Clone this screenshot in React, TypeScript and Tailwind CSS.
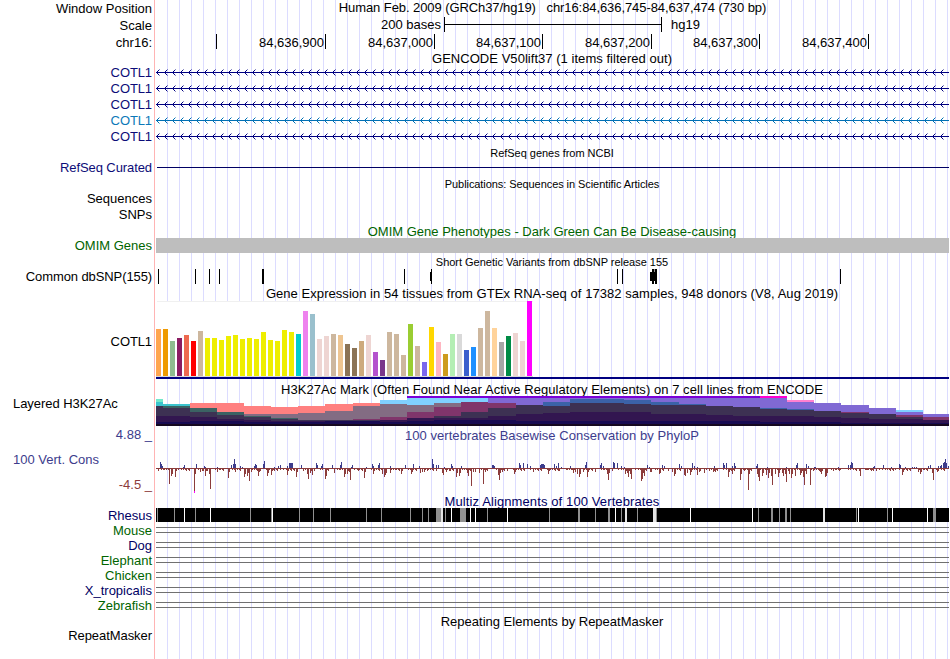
import React from 'react';

interface TrackTitleProps {
  text: string;
  className?: string;
}

interface TrackRowProps {
  label: string;
  className?: string;
  labelClassName?: string;
  height: number;
  children?: React.ReactNode;
}

// Pixel columns of the image that hold track data
const LEFT = 156;
const WIDTH = 793;

const guides = Array.from({ length: 66 }, (_, i) => 167 + i * 12);
const arrowTips = Array.from({ length: 99 }, (_, i) => LEFT + i * 8);

const genes = [
  { color: '#000080', text: 'text-[#0c0c78]' },
  { color: '#000080', text: 'text-[#0c0c78]' },
  { color: '#000080', text: 'text-[#0c0c78]' },
  { color: '#0070b4', text: 'text-[#0c78b8]' },
  { color: '#000080', text: 'text-[#0c0c78]' },
];

const ruler = [
  { x: 216, label: '' },
  { x: 325, label: '84,636,900' },
  { x: 434, label: '84,637,000' },
  { x: 542, label: '84,637,100' },
  { x: 651, label: '84,637,200' },
  { x: 759, label: '84,637,300' },
  { x: 868, label: '84,637,400' },
];

// x, y, width, height
const snps = [
  [158, 1, 1, 15], [195, 1, 1, 15], [209, 1, 1, 15], [219, 1, 1, 15], [262, 1, 2, 15],
  [404, 1, 1, 15], [430, 4, 1, 9], [431, 1, 1, 15], [617, 1, 1, 15], [622, 1, 1, 15],
  [650, 4, 7, 9], [652, 1, 2, 15], [655, 1, 1, 15], [656, 1, 1, 15], [840, 1, 1, 15],
];

const tissues: [number, string][] = [
  [47, '#ffa54f'], [47, '#ee9a00'], [35, '#8fbc8f'], [38, '#8b1c62'], [41, '#ee6a50'], [35, '#ff0000'],
  [45, '#cdb79e'], [38, '#eeee00'], [38, '#eeee00'], [36, '#eeee00'], [40, '#eeee00'], [41, '#eeee00'],
  [37, '#eeee00'], [38, '#eeee00'], [37, '#eeee00'], [44, '#eeee00'], [36, '#eeee00'], [35, '#eeee00'],
  [46, '#eeee00'], [44, '#eeee00'], [42, '#00cdcd'], [65, '#ee82ee'], [62, '#9ac0cd'], [37, '#eed5d2'],
  [40, '#eed5d2'], [42, '#cdb79e'], [41, '#eec591'], [32, '#8b7355'], [28, '#8b7355'], [35, '#cdaa7d'],
  [41, '#eed5d2'], [24, '#b452cd'], [16, '#7a378b'], [44, '#cdb79e'], [42, '#cdb79e'], [21, '#cdb79e'],
  [52, '#9acd32'], [30, '#cdb79e'], [14, '#7a67ee'], [49, '#ffd700'], [34, '#ffb6c1'], [22, '#cd9b1d'],
  [42, '#b4eeb4'], [42, '#d9d9d9'], [26, '#3a5fcd'], [29, '#1e90ff'], [48, '#cdb79e'], [65, '#cdb79e'],
  [48, '#ffd39b'], [34, '#a6a6a6'], [40, '#008b45'], [43, '#eed5d2'], [35, '#eed5d2'], [75, '#ff00ff'],
];

const MINT = '#73e8cb';
const CYAN = '#3cc4cd';
const TEAL = '#3b6263';
const SALMON = '#ff8080';
const MAUVE = '#836c83';
const SKY = '#80d0ff';
const PLUM = '#80356b';
const VIOLET = '#7b00d8';
const PURPLE = '#8069d4';
const BLUE = '#3b62a8';
const SLATE = '#3d3153';
const DEEP = '#321650';
const NAVY = '#180b52';

// Each cell starts at x, its layers at the given y and run down to the next layer
const h3k27ac: [number, [number, string][]][] = [
  [156, [[3, MINT], [6, CYAN], [10, SLATE], [20, DEEP], [26, NAVY]]],
  [163, [[8, CYAN], [10, TEAL], [12, SLATE], [20, DEEP], [26, NAVY]]],
  [190, [[7, SALMON], [12, TEAL], [16, SLATE], [21, DEEP], [25, NAVY]]],
  [217, [[7, SALMON], [16, TEAL], [19, SLATE], [23, DEEP], [25, NAVY]]],
  [244, [[10, SALMON], [18, MAUVE], [20, TEAL], [21, SLATE], [24, DEEP], [26, NAVY]]],
  [271, [[11, SALMON], [18, MAUVE], [22, TEAL], [23, SLATE], [25, DEEP], [26, NAVY]]],
  [298, [[10, SALMON], [17, MAUVE], [24, SLATE], [25, DEEP], [26, NAVY]]],
  [325, [[8, SALMON], [15, MAUVE], [24, SLATE], [25, NAVY]]],
  [353, [[7, SALMON], [10, MAUVE], [23, PLUM], [24, SLATE], [25, NAVY]]],
  [380, [[4, SKY], [8, MAUVE], [21, PLUM], [24, DEEP], [26, NAVY]]],
  [407, [[0, VIOLET], [2, SKY], [9, MAUVE], [16, PLUM], [22, DEEP], [25, NAVY]]],
  [434, [[0, VIOLET], [2, SKY], [7, MAUVE], [11, PLUM], [20, SLATE], [22, DEEP], [24, NAVY]]],
  [461, [[0, VIOLET], [2, SKY], [6, PLUM], [16, SLATE], [22, DEEP], [24, NAVY]]],
  [488, [[0, VIOLET], [2, PURPLE], [7, PLUM], [12, SLATE], [20, DEEP], [24, NAVY]]],
  [516, [[0, VIOLET], [2, PURPLE], [9, SLATE], [18, DEEP], [25, NAVY]]],
  [543, [[0, VIOLET], [2, PURPLE], [6, BLUE], [10, SLATE], [17, DEEP], [25, NAVY]]],
  [570, [[0, VIOLET], [2, PURPLE], [3, BLUE], [7, SLATE], [16, DEEP], [25, NAVY]]],
  [597, [[0, VIOLET], [2, PURPLE], [3, BLUE], [7, SLATE], [16, DEEP], [25, NAVY]]],
  [624, [[0, VIOLET], [2, PURPLE], [4, BLUE], [8, SLATE], [16, DEEP], [25, NAVY]]],
  [651, [[0, VIOLET], [2, PURPLE], [6, BLUE], [9, SLATE], [18, DEEP], [25, NAVY]]],
  [679, [[0, VIOLET], [2, PURPLE], [8, BLUE], [9, SLATE], [18, DEEP], [25, NAVY]]],
  [706, [[0, VIOLET], [2, PURPLE], [10, SLATE], [19, DEEP], [25, NAVY]]],
  [733, [[0, VIOLET], [2, PURPLE], [11, SLATE], [20, DEEP], [25, NAVY]]],
  [760, [[0, '#ff00d0'], [2, PURPLE], [12, BLUE], [13, SLATE], [20, DEEP], [26, NAVY]]],
  [787, [[4, '#ff80d0'], [6, PURPLE], [13, BLUE], [14, SLATE], [20, DEEP], [26, NAVY]]],
  [814, [[7, PURPLE], [15, SLATE], [21, DEEP], [26, NAVY]]],
  [841, [[9, PURPLE], [16, PLUM], [17, SLATE], [22, DEEP], [27, NAVY]]],
  [869, [[12, PURPLE], [18, SLATE], [23, DEEP], [27, NAVY]]],
  [896, [[14, SKY], [16, PURPLE], [19, PLUM], [21, SLATE], [23, DEEP], [27, NAVY]]],
  [923, [[18, PURPLE], [21, PLUM], [24, DEEP], [27, NAVY]]],
];

// Conserved (up) and fast evolving (down) bases: x, score height
const conserved = [
  [160, 6], [161, 4], [162, 2], [184, 3], [183, 1], [196, 4], [204, 2], [205, 1], [217, 1], [231, 3], [234, 9],
  [233, 4], [235, 4], [240, 2], [242, 1], [254, 2], [255, 4], [256, 3], [263, 4], [264, 7], [274, 1], [278, 2],
  [280, 3], [287, 2], [289, 5], [290, 5], [291, 5], [292, 5], [301, 3], [316, 5], [317, 3], [322, 4], [321, 2],
  [332, 3], [341, 6], [340, 3], [352, 3], [351, 1], [366, 1], [372, 4], [373, 2], [378, 3], [379, 5], [390, 2],
  [405, 3], [413, 4], [419, 2], [432, 9], [433, 4], [436, 3], [438, 3], [444, 1], [451, 4], [452, 2], [461, 2],
  [492, 3], [493, 3], [494, 2], [519, 5], [520, 3], [523, 5], [527, 4], [530, 2], [540, 3], [541, 4], [542, 4],
  [543, 4], [544, 3], [554, 4], [556, 2], [558, 5], [561, 1], [570, 2], [585, 3], [586, 6], [600, 3], [601, 5],
  [603, 2], [613, 6], [614, 5], [617, 5], [621, 2], [624, 1], [647, 3], [649, 1], [662, 3], [664, 2], [679, 4],
  [681, 2], [692, 5], [694, 2], [697, 1], [714, 2], [723, 5], [724, 3], [726, 5], [732, 2], [734, 5], [735, 2],
  [756, 2], [757, 4], [767, 1], [786, 1], [796, 3], [797, 5], [806, 4], [808, 2], [814, 1], [815, 1], [838, 1],
  [848, 3], [850, 3], [851, 6], [852, 5], [873, 1], [874, 2], [883, 3], [891, 1], [899, 4], [900, 3], [905, 1],
  [912, 1], [914, 1], [916, 1], [928, 2], [930, 3], [938, 2], [940, 2], [941, 3], [943, 5], [944, 6], [945, 9],
  [946, 5], [948, 2],
];

const accelerated = [
  [158, 3], [169, 16], [171, 8], [172, 6], [175, 9], [176, 3], [186, 3], [194, 23], [195, 6], [200, 4], [202, 3],
  [205, 8], [207, 3], [210, 21], [209, 6], [217, 4], [228, 10], [229, 4], [235, 4], [239, 2], [244, 9], [245, 6],
  [247, 8], [249, 13], [248, 5], [251, 4], [258, 8], [259, 4], [267, 8], [268, 5], [271, 7], [272, 3], [280, 2],
  [287, 7], [288, 3], [296, 9], [297, 4], [303, 3], [308, 11], [307, 6], [310, 5], [312, 7], [314, 3], [325, 11],
  [326, 8], [334, 5], [339, 2], [344, 9], [345, 6], [347, 6], [350, 12], [349, 4], [358, 3], [364, 10], [365, 4],
  [373, 6], [374, 3], [382, 6], [384, 9], [385, 7], [386, 5], [390, 5], [401, 6], [402, 3], [411, 6], [412, 4],
  [420, 5], [422, 4], [424, 4], [427, 3], [443, 7], [442, 5], [446, 4], [449, 3], [456, 9], [457, 5], [459, 8],
  [460, 5], [468, 8], [467, 5], [471, 18], [473, 4], [475, 4], [479, 5], [483, 16], [485, 4], [499, 12], [498, 7],
  [500, 5], [502, 4], [507, 3], [514, 6], [515, 4], [523, 2], [533, 4], [548, 6], [549, 3], [559, 3], [566, 2],
  [573, 5], [575, 4], [577, 6], [579, 9], [580, 6], [583, 4], [587, 9], [588, 4], [595, 4], [608, 12], [607, 6],
  [609, 5], [625, 6], [628, 9], [627, 5], [631, 11], [630, 6], [641, 13], [642, 11], [644, 8], [643, 5], [650, 4],
  [651, 4], [659, 6], [660, 5], [668, 3], [672, 4], [674, 8], [675, 6], [684, 7], [685, 8], [687, 5], [690, 7],
  [691, 4], [697, 7], [699, 4], [704, 5], [709, 3], [713, 4], [715, 4], [728, 9], [729, 4], [732, 6], [740, 12],
  [741, 6], [744, 3], [748, 22], [749, 6], [757, 6], [759, 13], [758, 9], [762, 8], [763, 5], [766, 7], [768, 10],
  [769, 5], [772, 17], [771, 8], [775, 6], [778, 9], [779, 5], [783, 8], [782, 5], [786, 14], [785, 6], [789, 6],
  [791, 10], [792, 6], [795, 8], [800, 7], [801, 5], [804, 17], [803, 9], [806, 6], [810, 17], [813, 3], [820, 4],
  [821, 6], [825, 9], [826, 8], [827, 5], [833, 3], [840, 2], [860, 8], [859, 3], [866, 2], [871, 3], [879, 2],
  [887, 2], [895, 2], [902, 7], [903, 4], [907, 3], [918, 4], [920, 6], [921, 4], [926, 2], [933, 12], [932, 5],
  [937, 4], [938, 3],
];

// x, width, color of alignment gaps
const rhesusGaps: [number, number, string][] = [
  [157, 1, '#909090'], [174, 1, '#909090'], [184, 1, '#fff'], [195, 1, '#909090'], [210, 1, '#fff'],
  [250, 1, '#909090'], [271, 1, '#909090'], [272, 1, '#fff'], [299, 1, '#909090'], [313, 1, '#909090'],
  [330, 1, '#909090'], [366, 1, '#909090'], [381, 1, '#909090'], [410, 1, '#909090'], [422, 1, '#909090'],
  [428, 1, '#909090'], [436, 5, '#909090'], [441, 2, '#e4e4e4'], [445, 1, '#909090'], [451, 1, '#fff'],
  [460, 6, '#909090'], [470, 1, '#fff'], [475, 1, '#fff'], [487, 1, '#909090'], [507, 1, '#fff'],
  [549, 1, '#909090'], [578, 2, '#909090'], [595, 1, '#909090'], [608, 2, '#909090'], [615, 1, '#fff'],
  [621, 1, '#909090'], [625, 2, '#e4e4e4'], [637, 1, '#909090'], [653, 3, '#e4e4e4'], [656, 1, '#909090'],
  [690, 1, '#fff'], [752, 1, '#fff'], [758, 1, '#909090'], [771, 2, '#909090'], [779, 1, '#909090'],
  [785, 2, '#909090'], [790, 1, '#909090'], [823, 2, '#e4e4e4'], [856, 1, '#909090'], [858, 1, '#fff'],
  [887, 1, '#909090'], [892, 1, '#fff'], [927, 1, '#fff'], [933, 3, '#909090'],
];

const species = [
  { name: 'Mouse', text: 'text-[#006400]' },
  { name: 'Dog', text: 'text-[#000064]' },
  { name: 'Elephant', text: 'text-[#006400]' },
  { name: 'Chicken', text: 'text-[#006400]' },
  { name: 'X_tropicalis', text: 'text-[#000064]' },
  { name: 'Zebrafish', text: 'text-[#006400]' },
];

const TrackTitle = ({ text, className = '' }: TrackTitleProps) => (
  <div className={`ml-[156px] flex w-[792px] justify-center whitespace-pre ${className}`}>
    <span>{text}</span>
  </div>
);

const Plot = ({ height, children }: { height: number; children?: React.ReactNode }) => (
  <svg width={WIDTH} height={height} viewBox={`${LEFT} 0 ${WIDTH} ${height}`} shapeRendering="crispEdges" className="block">
    {children}
  </svg>
);

const TrackRow = ({ label, className = '', labelClassName = 'pt-px', height, children }: TrackRowProps) => (
  <div className={`flex ${className}`}>
    <div className={`mr-1 w-[152px] shrink-0 text-right whitespace-nowrap ${labelClassName}`}>{label}</div>
    {children && <Plot height={height}>{children}</Plot>}
  </div>
);

const Arrows = ({ color }: { color: string }) => (
  <>
    <rect x={LEFT} y={8} width={WIDTH} height={1} fill={color} />
    {arrowTips.map((x) => (
      <g key={x} fill={color}>
        <rect x={x + 1} y={7} width={1} height={3} />
        <rect x={x + 2} y={6} width={1} height={1} />
        <rect x={x + 2} y={10} width={1} height={1} />
        <rect x={x + 3} y={5} width={1} height={1} opacity={0.45} />
        <rect x={x + 3} y={11} width={1} height={1} opacity={0.45} />
      </g>
    ))}
  </>
);

const GuideLines = () => (
  <svg width={950} height={659} shapeRendering="crispEdges" className="absolute inset-0">
    {guides.map((x) => (
      <rect key={x} x={x} y={0} width={1} height={659} fill="#dcdcff" />
    ))}
    <rect x={154} y={0} width={1} height={659} fill="#ffb4b4" />
  </svg>
);

const ExpressionBars = () => (
  <>
    <rect x={156} y={0} width={377} height={76} fill="#fff" />
    <rect x={157} y={0} width={376} height={1} fill="#f0f0f0" />
    <rect x={156} y={75} width={377} height={1} fill="#d8d8d8" />
    {tissues.map(([value, color], i) => (
      <rect key={i} x={LEFT + i * 7} y={75 - value} width={5} height={value} fill={color} />
    ))}
    <rect x={LEFT} y={76} width={WIDTH} height={2} fill="#000080" />
  </>
);

const HistoneLayers = () => (
  <>
    {h3k27ac.map(([x, layers], i) => {
      const end = i + 1 < h3k27ac.length ? h3k27ac[i + 1][0] : LEFT + WIDTH;
      return layers.map(([y, color]) => (
        <rect key={`${x}-${y}`} x={x} y={y} width={end - x} height={30 - y} fill={color} />
      ));
    })}
    <rect x={LEFT} y={28} width={WIDTH} height={2} fill="#150820" />
  </>
);

const ConservationWiggle = () => (
  <>
    {Array.from({ length: WIDTH }, (_, i) => (
      // background scores stay within a few pixels of the zero line
      <rect key={i} x={LEFT + i} y={26} width={1} height={[1, 1, 2, 1, 3, 2, 1, 1, 2, 1, 1][(i * 7 + (i >> 3)) % 11]} fill="#8c3c3c" />
    ))}
    {accelerated.map(([x, h]) => (
      <rect key={x} x={x} y={26} width={1} height={h} fill="#8c3c3c" />
    ))}
    {conserved.map(([x, h]) => (
      <rect key={x} x={x} y={26 - h} width={1} height={h} fill="#3c3c8c" />
    ))}
    <rect x={194} y={49} width={1} height={2} fill="#ff00ff" />
  </>
);

export default function App() {
  return (
    <div className="relative h-[659px] w-[950px] overflow-hidden bg-white font-['Liberation_Sans',Arial,sans-serif] text-[13px] leading-[15px] text-black">
      <GuideLines />

      <div className="relative">
        {/* Position, scale and ruler */}
        <div className="flex h-[17px]">
          <div className="mr-1 w-[152px] pt-px text-right">Window Position</div>
          <div className="w-[793px] text-center tracking-[-0.08px] whitespace-pre">
            Human Feb. 2009 (GRCh37/hg19){'   '}chr16:84,636,745-84,637,474 (730 bp)
          </div>
        </div>
        <div className="flex h-4">
          <div className="mr-1 w-[152px] pt-px text-right">Scale</div>
          <div className="w-[285px] text-right">200 bases</div>
          <div className="ml-[3px] flex h-[15px] w-[218px] items-center border-x border-black">
            <div className="h-px w-full bg-black" />
          </div>
          <div className="ml-[9px]">hg19</div>
        </div>
        <div className="flex h-4">
          <div className="mr-1 w-[152px] pt-0.5 text-right">chr16:</div>
          <Plot height={16}>
            {ruler.map(({ x, label }) => (
              <g key={x}>
                <rect x={x} y={1} width={1} height={15} fill="#000" />
                <text x={x - 1} y={14} textAnchor="end">{label}</text>
              </g>
            ))}
          </Plot>
        </div>

        {/* Gene models */}
        <TrackTitle text="GENCODE V50lift37 (1 items filtered out)" className="h-[15px] pt-0.5 tracking-[0.04px]" />
        {genes.map((gene, i) => (
          <TrackRow key={i} label="COTL1" height={16} className="h-4" labelClassName={`pt-px tracking-[-0.1px] ${gene.text}`}>
            <Arrows color={gene.color} />
          </TrackRow>
        ))}
        <TrackTitle text="RefSeq genes from NCBI" className="h-[15px] pt-[3px] text-[11px] leading-3 tracking-[-0.03px]" />
        <TrackRow label="RefSeq Curated" height={16} className="h-4" labelClassName="pt-px tracking-[-0.09px] text-[#0c0c78]">
          <rect x={157} y={8} width={792} height={1} fill="#000064" />
        </TrackRow>

        {/* Literature */}
        <TrackTitle text="Publications: Sequences in Scientific Articles" className="h-[15px] pt-[3px] text-[11px] leading-3 tracking-[-0.07px]" />
        <TrackRow label="Sequences" height={16} className="h-4" />
        <TrackRow label="SNPs" height={16} className="h-4" />
        <TrackTitle
          text="OMIM Gene Phenotypes - Dark Green Can Be Disease-causing"
          className="h-4 pt-0.5 text-[#006400]"
        />
        <TrackRow label="OMIM Genes" height={15} className="h-[15px]" labelClassName="text-[#006400]">
          <rect x={LEFT} y={0} width={WIDTH} height={15} fill="#bebebe" />
        </TrackRow>

        {/* Variation */}
        <TrackTitle text="Short Genetic Variants from dbSNP release 155" className="h-[15px] pt-[3px] text-[11px] leading-3 tracking-[-0.02px]" />
        <TrackRow label="Common dbSNP(155)" height={16} className="h-4" labelClassName="pt-px tracking-[-0.1px]">
          {snps.map(([x, y, width, height]) => (
            <rect key={x} x={x} y={y} width={width} height={height} fill="#000" />
          ))}
          <rect x={654} y={1} width={1} height={3} fill="#909090" />
        </TrackRow>

        {/* Expression */}
        <TrackTitle
          text="Gene Expression in 54 tissues from GTEx RNA-seq of 17382 samples, 948 donors (V8, Aug 2019)"
          className="h-[17px] pt-0.5 tracking-[0.055px]"
        />
        <TrackRow label="COTL1" height={78} className="h-[78px]" labelClassName="pt-[33px] tracking-[-0.1px]">
          <ExpressionBars />
        </TrackRow>

        {/* Regulation */}
        <TrackTitle
          text="H3K27Ac Mark (Often Found Near Active Regulatory Elements) on 7 cell lines from ENCODE"
          className="h-[17px] pt-[3px] tracking-[0.05px]"
        />
        <div className="flex h-[30px]">
          <div className="mr-1 w-[152px] pl-[13px] tracking-[-0.05px]">Layered H3K27Ac</div>
          <Plot height={30}>
            <HistoneLayers />
          </Plot>
        </div>

        {/* Conservation */}
        <div className="flex h-[66px]">
          <div className="mr-1 w-[152px]">
            <div className="pt-px text-right text-[#3c3c8c]">4.88 _</div>
            <div className="pt-2.5 pl-[13px] text-[#3c3c8c]">100 Vert. Cons</div>
            <div className="pt-2.5 text-right text-[#8c3c3c]">-4.5 _</div>
          </div>
          <div className="w-[793px]">
            <div className="h-4 w-[792px] pt-0.5 text-center tracking-[0.04px] text-[#3c3c8c]">
              100 vertebrates Basewise Conservation by PhyloP
            </div>
            <Plot height={52}>
              <ConservationWiggle />
            </Plot>
          </div>
        </div>
        <TrackTitle text="Multiz Alignments of 100 Vertebrates" className="h-4 pt-0.5 tracking-[0.11px] text-[#000064]" />
        <TrackRow label="Rhesus" height={14} className="h-[15px]" labelClassName="text-[#000064]">
          <rect x={LEFT} y={0} width={WIDTH} height={14} fill="#000" />
          {rhesusGaps.map(([x, width, color]) => (
            <rect key={x} x={x} y={0} width={width} height={14} fill={color} />
          ))}
        </TrackRow>
        {species.map(({ name, text }) => (
          <TrackRow key={name} label={name} height={15} className="h-[15px]" labelClassName={text}>
            <rect x={LEFT} y={4} width={WIDTH} height={1} fill="#707070" />
            <rect x={LEFT} y={9} width={WIDTH} height={1} fill="#707070" />
          </TrackRow>
        ))}

        {/* Repeats */}
        <TrackTitle text="Repeating Elements by RepeatMasker" className="h-3.5 pt-px" />
        <TrackRow label="RepeatMasker" height={16} className="h-8" labelClassName="pt-px tracking-[-0.06px]" />
      </div>
    </div>
  );
}
